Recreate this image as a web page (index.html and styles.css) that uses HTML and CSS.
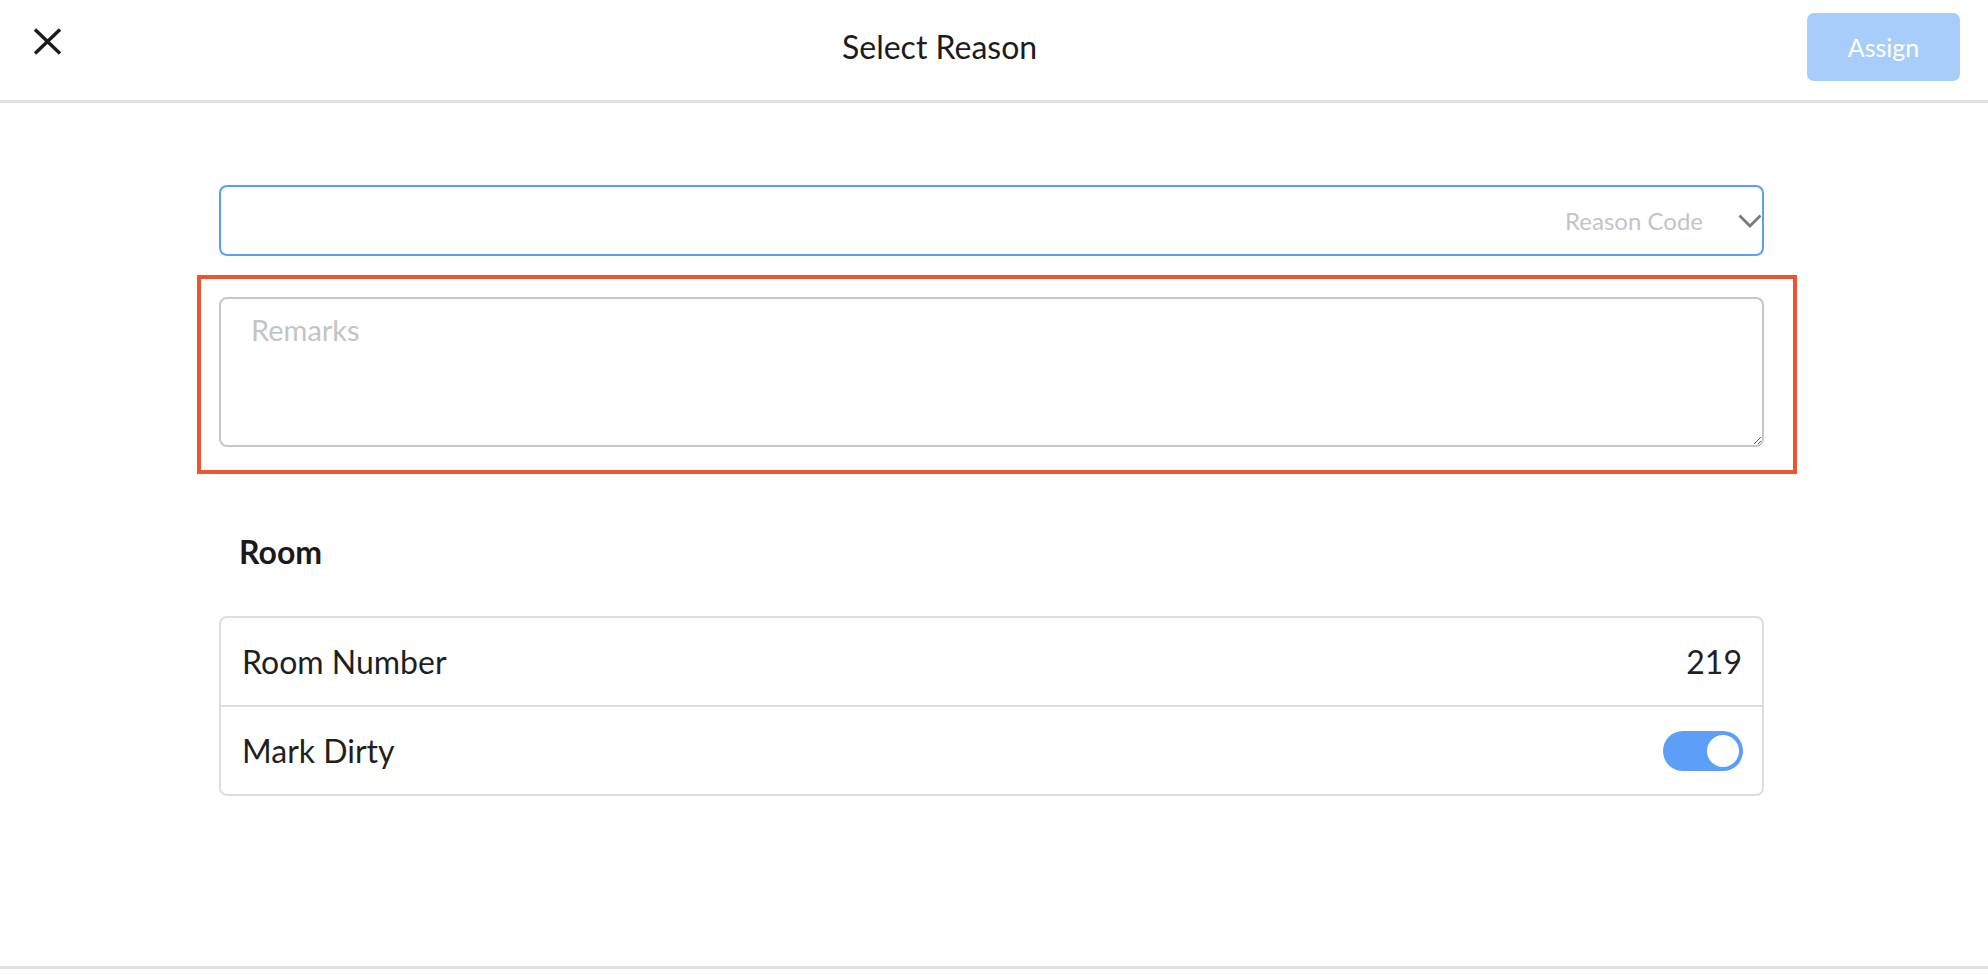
FILE: index.html
```html
<!DOCTYPE html>
<html lang="en">
<head>
<meta charset="utf-8">
<title>Select Reason</title>
<link rel="stylesheet" href="styles.css">
</head>
<body>
<header class="topbar">
  <button class="close-btn" aria-label="Close">
    <svg width="29" height="27" viewBox="0 0 29 27"><path d="M2 1.5 L27 25.5 M27 1.5 L2 25.5" stroke="#1c1c1c" stroke-width="3.4" fill="none"/></svg>
  </button>
  <h1 class="title">Select Reason</h1>
  <button class="assign-btn">Assign</button>
</header>
<main class="content">
  <div class="select-field">
    <span class="select-placeholder">Reason Code</span>
    <svg class="chevron" width="24" height="14" viewBox="0 0 24 14"><polyline points="1.5,1.5 12,12 22.5,1.5" stroke="#7a7a7a" stroke-width="2.8" fill="none"/></svg>
  </div>
  <div class="highlight">
    <textarea class="remarks" placeholder="Remarks"></textarea>
  </div>
  <h2 class="section-title">Room</h2>
  <div class="card">
    <div class="row"><span class="row-label">Room Number</span><span class="row-value">219</span></div>
    <div class="row"><span class="row-label">Mark Dirty</span><div class="toggle"><div class="knob"></div></div></div>
  </div>
</main>
<footer class="bottombar"></footer>
</body>
</html>
```
FILE: styles.css
```css
* { box-sizing: border-box; }
html, body { margin: 0; padding: 0; }
body {
  height: 100vh;
  display: flex;
  flex-direction: column;
  background: #ffffff;
  font-family: Lato, "Liberation Sans", sans-serif;
  color: #1e1e1e;
  overflow: hidden;
}
.topbar {
  height: 103px;
  flex: 0 0 103px;
  border-bottom: 3px solid #e1e1e1;
  display: flex;
  align-items: flex-start;
}
.close-btn {
  margin: 28px 0 0 33px;
  padding: 0;
  border: 0;
  background: none;
  width: 29px;
  height: 27px;
  display: block;
}
.close-btn svg { display: block; }
.title {
  margin: 27px 0 0 780px;
  font-size: 32px;
  line-height: 40px;
  font-weight: 400;
  color: #1c1c1c;
}
.assign-btn {
  margin: 13px 28px 0 auto;
  width: 153px;
  height: 68px;
  border: 0;
  border-radius: 7px;
  background: #a9cdfa;
  color: #ffffff;
  font-family: Lato, "Liberation Sans", sans-serif;
  font-size: 25px;
  padding: 0;
}
.content {
  flex: 1;
  padding-top: 82px;
  margin-left: 219px;
  width: 1545px;
}
.select-field {
  height: 71px;
  border: 2px solid #5d9ff8;
  border-radius: 8px;
  display: flex;
  align-items: center;
  justify-content: flex-end;
  gap: 35px;
}
.select-placeholder {
  font-size: 24px;
  color: #c2c4ca;
}
.chevron { display: block; margin-top: 1px; }
.highlight {
  margin: 19px -33px 0 -22px;
  border: 4px solid #ea5534;
  padding: 18px 29px 23px 18px;
}
.remarks {
  display: block;
  width: 100%;
  height: 150px;
  border: 2px solid #c4c6cc;
  border-radius: 8px;
  padding: 13px 30px;
  font-family: Lato, "Liberation Sans", sans-serif;
  font-size: 29px;
  line-height: 36px;
  color: #1e1e1e;
  outline: none;
}
.remarks::placeholder { color: #c2c4ca; }
.section-title {
  margin: 59px 0 0 20px;
  font-size: 32px;
  line-height: 38px;
  font-weight: 700;
  color: #1a1a1a;
}
.card {
  margin-top: 45px;
  border: 2px solid #dddddd;
  border-radius: 8px;
}
.row {
  height: 87px;
  display: flex;
  align-items: center;
  justify-content: space-between;
  padding: 0 20px 0 21px;
  font-size: 32px;
  color: #1f1f1f;
}
.row + .row { border-top: 2px solid #dddddd; height: 89px; }
.toggle {
  width: 80px;
  height: 40px;
  border-radius: 20px;
  background: #5c9ef8;
  display: flex;
  justify-content: flex-end;
  align-items: center;
  padding: 0 4px;
  margin-right: -1px;
}
.knob {
  width: 32px;
  height: 32px;
  border-radius: 50%;
  background: #ffffff;
}
.bottombar {
  flex: 0 0 8px;
  border-top: 3px solid #e1e1e1;
}
```
